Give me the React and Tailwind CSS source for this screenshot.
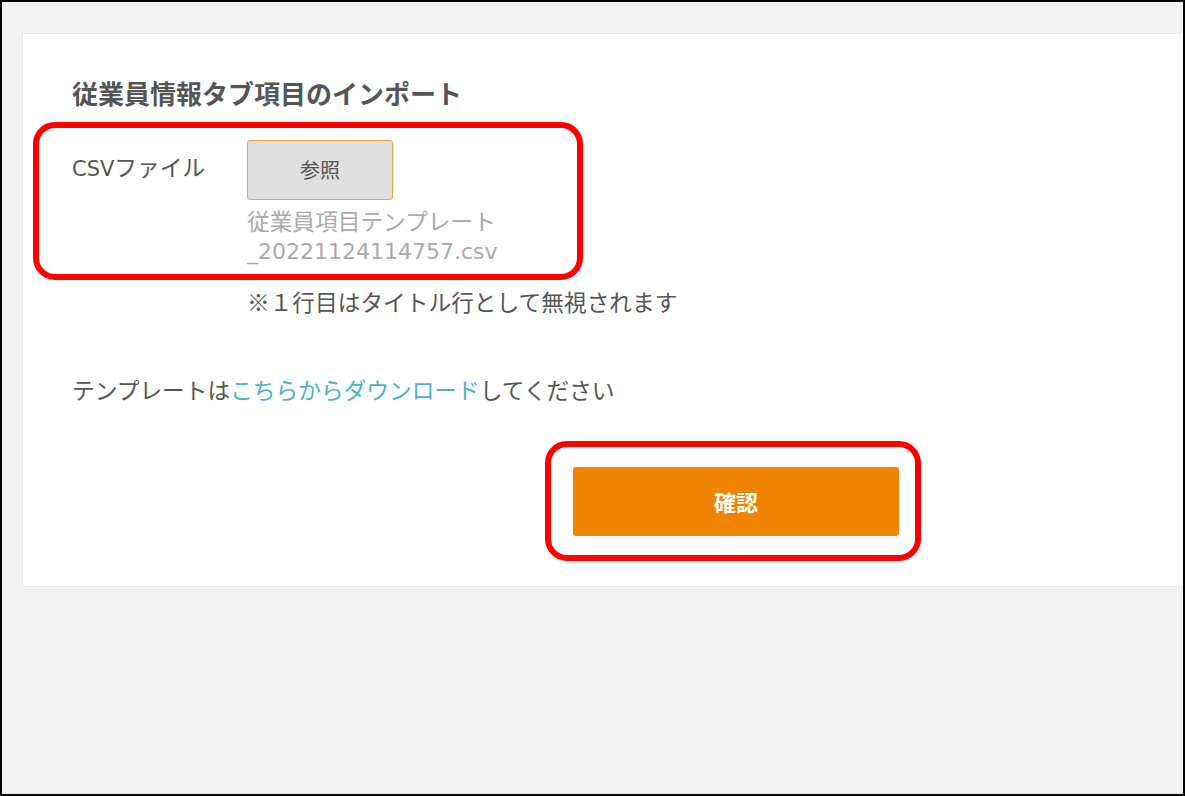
export default function App() {
  const font = { fontFamily: '"Noto Sans CJK JP", "Noto Sans", sans-serif' };
  const latin = { fontFamily: '"DejaVu Sans", "Noto Sans CJK JP", sans-serif' };
  return (
    <div
      className="relative w-[1185px] h-[796px] border-2 border-black bg-[#f2f2f2] pt-[31px] pl-[20px] overflow-hidden"
      style={font}
    >
      <div className="bg-white border border-[#e9e9e9] border-r-0 h-[554px] pl-[49px] pt-[42px] pb-[50px]">
        <h1 className="text-[26px] leading-[34px] font-bold text-[#555]">
          従業員情報タブ項目のインポート
        </h1>
        <div className="mt-[30px] flex">
          <div className="w-[175px] h-[31px] text-[22.7px] leading-[31px] text-[#555] mt-[11px]">
            <span className="text-[21px] leading-[31px]" style={latin}>CSV</span>ファイル
          </div>
          <div className="flex flex-col">
            <button className="w-[146px] h-[60px] bg-[#e0e0e0] border border-[#f2a13a] rounded-[3px] text-[20px] text-[#555]">
              参照
            </button>
            <div className="mt-[5px] text-[22.7px] leading-[31px] text-[#aaa]">
              <div className="h-[31px]">従業員項目テンプレート</div>
              <div className="h-[31px] text-[22px] leading-[31px]" style={latin}>_20221124114757.csv</div>
            </div>
            <div className="mt-[19px] h-[31px] text-[22.7px] leading-[31px] text-[#555]">
              ※１行目はタイトル行として無視されます
            </div>
          </div>
        </div>
        <div className="mt-[57px] h-[31px] text-[22.7px] leading-[31px] text-[#555]">
          テンプレートは<span className="text-[#4bb3c9]">こちらからダウンロード</span>してください
        </div>
        <div className="mt-[62px] pl-[501px]">
          <button className="w-[326px] h-[69px] bg-[#f08300] rounded-[3px] text-white text-[22px] font-bold">
            確認
          </button>
        </div>
      </div>

      <div className="absolute left-[31px] top-[120px] w-[550px] h-[158px] border-[6px] border-[#ff0000] rounded-[22px] pointer-events-none" />
      <div className="absolute left-[543px] top-[439px] w-[376px] h-[120px] border-[6px] border-[#ff0000] rounded-[22px] pointer-events-none" />
    </div>
  );
}
